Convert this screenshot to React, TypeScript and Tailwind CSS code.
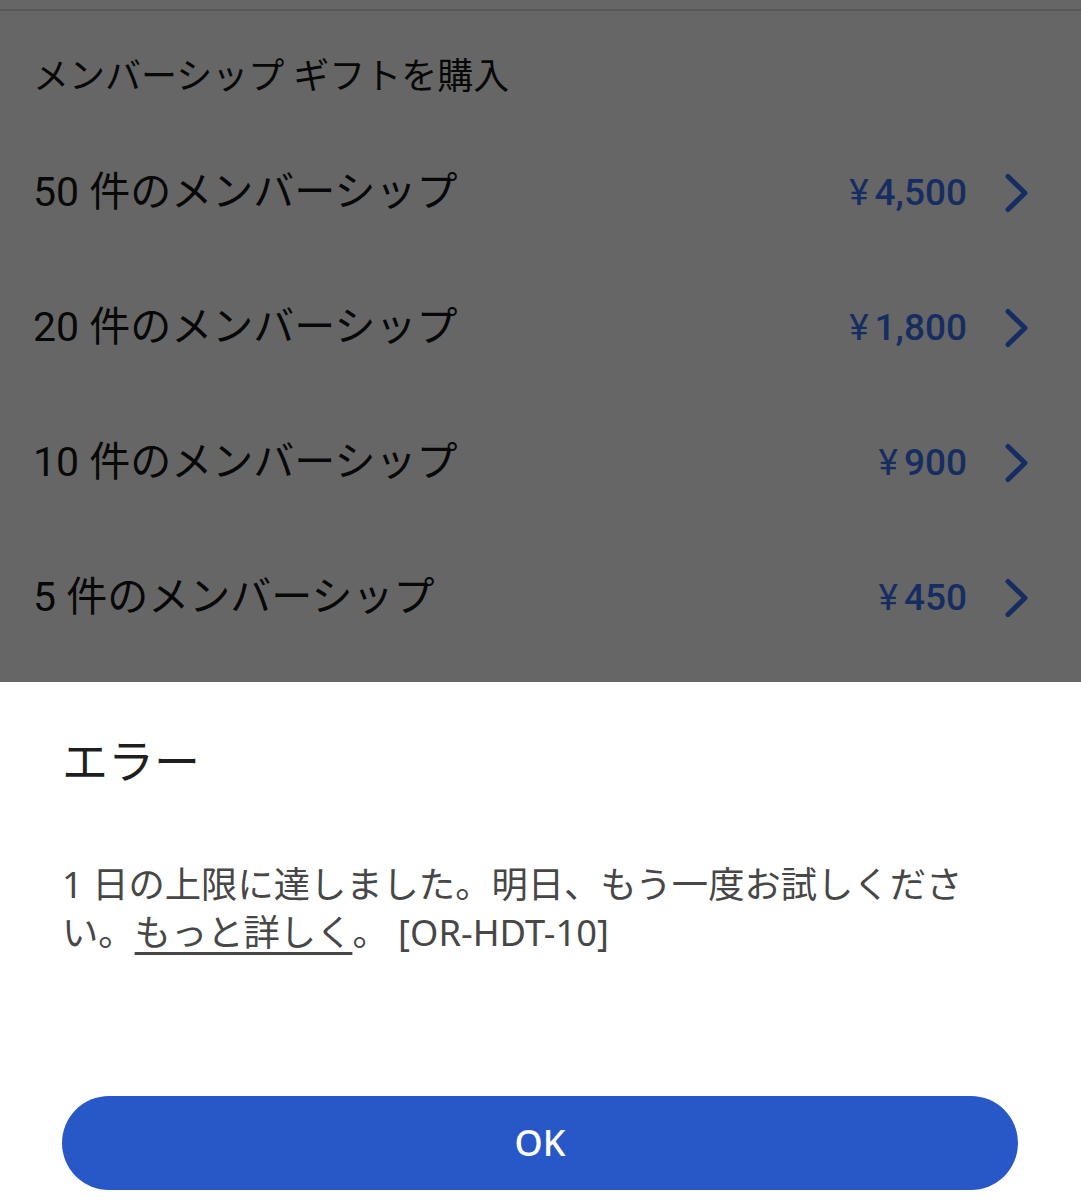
const FONT = "font-['Roboto','Noto_Sans_CJK_JP',sans-serif]";
const DIALOG_FONT = "font-['Noto_Sans','Noto_Sans_CJK_JP',sans-serif]";

const OPTIONS = [
  { label: '50 件のメンバーシップ', price: '4,500' },
  { label: '20 件のメンバーシップ', price: '1,800' },
  { label: '10 件のメンバーシップ', price: '900' },
  { label: '5 件のメンバーシップ', price: '450' },
];

function Chevron() {
  return (
    <svg width="28" height="40" viewBox="0 0 28 40" fill="none" className="shrink-0">
      <path d="M5 3.5 L22 20 L5 36.5" stroke="#162d62" strokeWidth="5" strokeLinecap="round" strokeLinejoin="round" />
    </svg>
  );
}

export default function App() {
  return (
    <div className={`w-[1081px] h-[1200px] overflow-hidden flex flex-col ${FONT}`}>
      {/* dimmed sheet behind the dialog */}
      <div className="h-[682px] shrink-0 bg-[#666666] flex flex-col">
        <div className="h-[9px] shrink-0" />
        <div className="h-[2px] shrink-0 bg-[#5a5a5a]" />
        <div className="h-[114px] shrink-0 flex items-center pt-[18px] pl-[33px]">
          <span className="text-[36px] leading-none text-[#080808]">メンバーシップ ギフトを購入</span>
        </div>
        {OPTIONS.map((o) => (
          <div key={o.label} className="h-[135px] shrink-0 flex items-center pl-[33px] pr-[50px]">
            <span className="flex-1 text-[41px] leading-none text-[#080808]">{o.label}</span>
            <span className="text-[37px] leading-none font-medium text-[#162d62] mr-[36px]">
              <span className="font-normal">¥</span>
              <span className="ml-[6px]">{o.price}</span>
            </span>
            <Chevron />
          </div>
        ))}
      </div>

      {/* error dialog */}
      <div className={`flex-1 bg-white flex flex-col px-[62px] ${DIALOG_FONT}`}>
        <h2 className="mt-[51px] text-[46px] leading-[1.2] font-normal text-[#1f1f1f]">エラー</h2>
        <p className="mt-[72px] w-[910px] text-[36.3px] leading-[48px] text-[#474747]">
          1 日の上限に達しました。明日、もう一度お試しください。
          <span className="underline decoration-[3px] underline-offset-[6px]">もっと詳しく</span>。 [OR-HDT-10]
        </p>
        <div className="flex-1" />
        <button className="mb-[10px] w-[956px] h-[94px] rounded-full bg-[#2858c8] text-white text-[36px] leading-none font-medium">
          OK
        </button>
      </div>
    </div>
  );
}
